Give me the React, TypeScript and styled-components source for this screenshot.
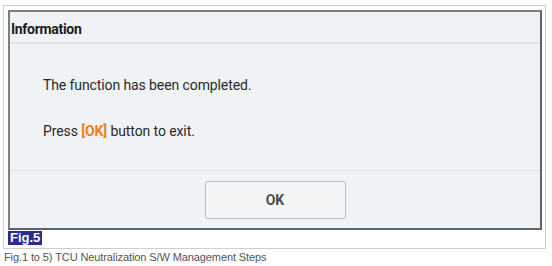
import React from "react";
import styled, { createGlobalStyle } from "styled-components";

const Global = createGlobalStyle`
  html, body { margin: 0; padding: 0; background: #ffffff; }
  body { font-family: "Liberation Sans", Arial, sans-serif; }
`;

const Page = styled.div`
  display: flex;
  flex-direction: column;
  padding: 5px 0 0 3px;
`;

const Figure = styled.div`
  width: 543px;
  height: 244px;
  box-sizing: border-box;
  border: 1px solid #cfcfcf;
  padding: 4px 3px 0 4px;
  display: flex;
  flex-direction: column;
`;

const Screen = styled.div`
  width: 534px;
  height: 220px;
  box-sizing: border-box;
  border: 2px solid #7a7e81;
  border-right-color: #5f6366;
  border-bottom-color: #5f6366;
  background: #f0f3f5;
  display: flex;
  flex-direction: column;
  font-family: Roboto, "Noto Sans", sans-serif;
`;

const Header = styled.div`
  height: 32px;
  display: flex;
  align-items: center;
  padding: 4px 0 0 1px;
  font-weight: 700;
  font-size: 14px;
  letter-spacing: -0.3px;
  color: #1b1b1b;
  border-bottom: 2px solid #dde2e4;
  box-sizing: border-box;
`;

const Body = styled.div`
  height: 127px;
  box-sizing: border-box;
  border-bottom: 1px solid #e1e5e7;
  padding: 31px 0 0 33px;
  display: flex;
  flex-direction: column;
  gap: 26px;
`;

const Line = styled.div`
  font-size: 14px;
  line-height: 20px;
  letter-spacing: -0.1px;
  color: #2a2a2a;
`;

const Key = styled.span`
  color: #f07d1e;
  font-weight: 700;
`;

const Footer = styled.div`
  flex: 1;
  display: flex;
  justify-content: center;
  padding-top: 10px;
`;

const Button = styled.div`
  width: 141px;
  height: 38px;
  box-sizing: border-box;
  border: 1px solid #b9bdc0;
  border-radius: 3px;
  background: #f2f4f5;
  display: flex;
  align-items: center;
  justify-content: center;
  font-weight: 700;
  font-size: 14px;
  color: #4a4d50;
`;

const Label = styled.div`
  margin-top: 1px;
  align-self: flex-start;
  background: #2c2c8e;
  color: #ffffff;
  font-weight: 700;
  font-size: 13px;
  line-height: 14px;
  padding: 0 2px;
  font-family: "Liberation Sans", Arial, sans-serif;
`;

const Caption = styled.div`
  margin: 1px 0 0 1px;
  font-size: 11px;
  line-height: 14px;
  letter-spacing: -0.1px;
  color: #555555;
`;

export default function App() {
  return (
    <>
      <Global />
      <Page>
        <Figure>
          <Screen>
            <Header>Information</Header>
            <Body>
              <Line>The function has been completed.</Line>
              <Line>
                Press <Key>[OK]</Key> button to exit.
              </Line>
            </Body>
            <Footer>
              <Button>OK</Button>
            </Footer>
          </Screen>
          <Label>Fig.5</Label>
        </Figure>
        <Caption>Fig.1 to 5) TCU Neutralization S/W Management Steps</Caption>
      </Page>
    </>
  );
}
